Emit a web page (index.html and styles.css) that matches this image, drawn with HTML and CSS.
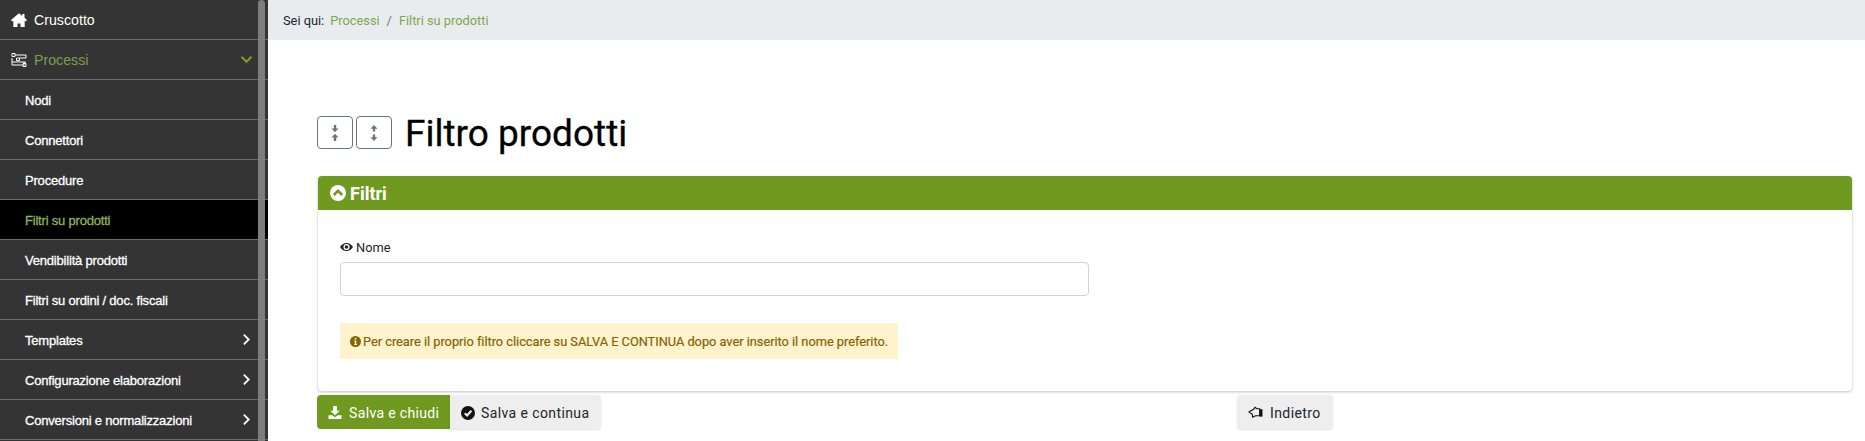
FILE: index.html
```html
<!DOCTYPE html>
<html lang="it">
<head>
<meta charset="utf-8">
<title>Filtro prodotti</title>
<link rel="stylesheet" href="styles.css">
</head>
<body>
<div class="layout">
  <aside class="sidebar">
    <nav class="menu">
      <a class="item top"><svg class="ico-home" viewBox="0 0 16 14"><path fill="#fff" d="M8 .2 0 7l1.200 1.400L2.300 7.500V14h4.200v-3.600h3V14h4.200V7.500l1.100.9L16 7l-2.500-2.200V1h-2.300v1.900L8 .2z"/></svg><span>Cruscotto</span></a>
      <a class="item top active-parent"><svg class="ico-proc" viewBox="0 0 16 14" fill="none" stroke="#fff" stroke-width="1"><path d="M4 2h11v3H6M1 .5h3v3H1zM1 5v4h14M5.500 5v2.500h3V5M13 9v3.500M4 12h8M12 10.500h3v3h-3zM1 9v3h3"/></svg><span>Processi</span><svg class="chev" viewBox="0 0 14 10"><path fill="none" stroke="#7c9f24" stroke-width="2.400" d="M1.500 2 7 7.500 12.500 2"/></svg></a>
      <a class="item sub">Nodi</a>
      <a class="item sub">Connettori</a>
      <a class="item sub">Procedure</a>
      <a class="item sub current">Filtri su prodotti</a>
      <a class="item sub">Vendibilità prodotti</a>
      <a class="item sub">Filtri su ordini / doc. fiscali</a>
      <a class="item sub">Templates<svg class="chev-r" viewBox="0 0 10 14"><path fill="none" stroke="#fff" stroke-width="2" d="M2 1.500 7.500 7 2 12.500"/></svg></a>
      <a class="item sub">Configurazione elaborazioni<svg class="chev-r" viewBox="0 0 10 14"><path fill="none" stroke="#fff" stroke-width="2" d="M2 1.500 7.500 7 2 12.500"/></svg></a>
      <a class="item sub">Conversioni e normalizzazioni<svg class="chev-r" viewBox="0 0 10 14"><path fill="none" stroke="#fff" stroke-width="2" d="M2 1.500 7.500 7 2 12.500"/></svg></a>
    </nav>
    <div class="scrollbar"></div>
  </aside>
  <main class="main">
    <div class="breadcrumb"><span class="here">Sei qui:</span><a>Processi</a><span class="sep">/</span><a>Filtri su prodotti</a></div>
    <div class="content">
      <div class="title-row">
        <button class="tool"><svg viewBox="0 0 10 18" width="10" height="18"><path fill="#6c757d" d="M3.800 1h2.400v3.500H8.500L5 8.300 1.500 4.500h2.300zM5 9.700l3.500 3.800H6.200V17H3.800v-3.500H1.500z"/></svg></button>
        <button class="tool"><svg viewBox="0 0 10 18" width="10" height="18"><path fill="#6c757d" d="M5 1l3.500 3.800H6.200v2.700H3.800V4.800H1.500zM3.800 10.500h2.400v2.700h2.300L5 17l-3.500-3.800h2.300z"/></svg></button>
        <h1>Filtro prodotti</h1>
      </div>
      <section class="card">
        <header class="card-head"><svg class="ico-up" viewBox="0 0 16 16"><circle cx="8" cy="8" r="8" fill="#fff"/><path fill="none" stroke="#6f9a1f" stroke-width="2.600" d="M3.800 10 8 5.800 12.200 10"/></svg><span>Filtri</span></header>
        <div class="card-body">
          <label class="label"><svg class="ico-eye" viewBox="0 0 16 12"><path fill="#212529" fill-rule="evenodd" d="M8 1C4.500 1 1.500 3.200 0 6c1.500 2.800 4.500 5 8 5s6.500-2.200 8-5c-1.500-2.800-4.500-5-8-5zM8 2.200a3.800 3.800 0 1 1 0 7.600 3.800 3.800 0 0 1 0-7.600zM8 3.800a2.200 2.200 0 1 0 0 4.400 2.200 2.200 0 0 0 0-4.400z"/></svg>Nome</label>
          <input class="input" type="text">
          <div class="alert"><svg class="ico-info" viewBox="0 0 16 16"><circle cx="8" cy="8" r="8" fill="#856404"/><path fill="#fff3cd" d="M6.800 2.800h2.400v2.400H6.800zM6 6.500h3.200v5h1V13H6v-1.500h1V8H6z"/></svg><span>Per creare il proprio filtro cliccare su SALVA E CONTINUA dopo aver inserito il nome preferito.</span></div>
        </div>
      </section>
      <div class="actions">
        <div class="group">
          <button class="btn primary"><svg class="ico-dl" viewBox="0 0 14 14"><path fill="#fff" d="M5 0h4v5h3L7 10 2 5h3zM0 10h4l3 2 3-2h4v4H0z"/></svg>Salva e chiudi</button>
          <button class="btn light"><svg class="ico-check" viewBox="0 0 16 16"><circle cx="8" cy="8" r="8" fill="#111"/><path fill="none" stroke="#eee" stroke-width="2.400" d="M4.300 8.200 7 10.900l4.800-5.400"/></svg>Salva e continua</button>
        </div>
        <button class="btn light back"><svg class="ico-hand" viewBox="0 0 16 14" fill="none" stroke="#111" stroke-width="1.200"><path d="M1 6.500l5-3 1.500-2L9.500 3h3v7.500H8L5 12 4.500 9 1 6.500z"/><path fill="#111" stroke="none" d="M12.500 3.500H15.500V11.500H12.500z"/></svg>Indietro</button>
      </div>
    </div>
  </main>
</div>
</body>
</html>
```
FILE: styles.css
```css
* { box-sizing: border-box; }
html, body { margin: 0; height: 441px; overflow: hidden; background: #fff; }
body { font-family: Roboto, "Liberation Sans", sans-serif; color: #212529; }
.layout { display: flex; height: 441px; }
.sidebar { width: 268px; flex: none; background: #343434; position: relative; overflow: hidden; }
.scrollbar { position: absolute; top: 0; bottom: 0; left: 258px; width: 7px; background: #7d7d7d; border-radius: 4px 4px 0 0; }
.menu { display: flex; flex-direction: column; }
.item { display: flex; align-items: center; height: 40px; border-bottom: 1px solid #6b6b6b; flex: none; position: relative; font-family: "Liberation Sans", Arial, sans-serif; color: #fff; white-space: nowrap; }
.top { font-size: 14.2px; padding-left: 11px; }
.ico-home { width: 16px; height: 14px; margin-right: 7px; }
.ico-proc { width: 16px; height: 14px; margin-right: 7px; }
.active-parent { color: #7c9f4a; }
.chev { position: absolute; left: 240px; top: 15px; width: 13px; height: 9px; }
.sub { font-size: 13px; padding-left: 25px; letter-spacing: -0.2px; -webkit-text-stroke: 0.3px #fff; padding-top: 1px; }
.current { background: #000; color: #8fb35a; -webkit-text-stroke: 0.3px #8fb35a; }
.chev-r { position: absolute; left: 242px; top: 13px; width: 9px; height: 13px; }
.main { flex: 1; min-width: 0; display: flex; flex-direction: column; }
.breadcrumb { height: 40px; background: #e9ecef; display: flex; align-items: center; padding-left: 15px; font-size: 12.8px; flex: none; }
.breadcrumb a { color: #7fa650; }
.here { margin-right: 6px; }
.sep { margin: 0 7px; color: #6c757d; }
.content { padding: 76px 13px 0 50px; display: flex; flex-direction: column; }
.title-row { display: flex; align-items: center; height: 33px; gap: 3px; margin-left: -1px; }
.tool { width: 36px; height: 33px; padding: 0; background: #fff; border: 1px solid #6c757d; border-radius: 4px; display: flex; align-items: center; justify-content: center; }
h1 { margin: 2px 0 0 10px; font-size: 37px; font-weight: 400; -webkit-text-stroke: 0.3px #000; color: #000; line-height: 40px; white-space: nowrap; }
.card { margin-top: 27px; height: 215px; border-radius: 4px; background: #fff; box-shadow: 0 1px 3px rgba(0,0,0,.25); }
.card-head { height: 34px; background: #6f9a1f; border-radius: 4px 4px 0 0; color: #fff; display: flex; align-items: center; padding-left: 12px; font-size: 18px; font-weight: 700; }
.ico-up { width: 16px; height: 16px; margin-right: 4px; }
.card-body { padding: 29px 22px 0; }
.label { display: flex; align-items: center; font-size: 12.8px; height: 16px; }
.ico-eye { width: 13px; height: 10px; margin-right: 3px; }
.input { display: block; width: 749px; height: 34px; margin-top: 7px; border: 1px solid #ced4da; border-radius: 4px; background: #fff; }
.alert { margin-top: 27px; width: 558px; height: 36px; background: #fff3cd; color: #856404; font-size: 12.8px; font-weight: 400; -webkit-text-stroke: 0.2px #856404; display: flex; align-items: center; padding: 1px 0 0 10px; white-space: nowrap; letter-spacing: -0.02px; }
.ico-info { width: 11px; height: 11px; margin-right: 2px; flex: none; }
.actions { margin-top: 4px; display: flex; position: relative; margin-left: -1px; }
.group { display: flex; }
.btn { height: 34px; border: 0; font-family: Roboto, sans-serif; font-size: 14px; letter-spacing: .4px; display: flex; align-items: center; padding: 1px 0 0 11px; white-space: nowrap; }
.primary { background: #6f9a1f; color: #fff; border-radius: 4px 0 0 4px; width: 133px; font-weight: 400; letter-spacing: .35px; }
.ico-dl { width: 14px; height: 13px; margin-right: 7px; flex: none; }
.light { background: #eee; color: #212529; border-radius: 0 4px 4px 0; box-shadow: 0 1px 2px rgba(0,0,0,.12); }
.group .light { width: 151px; }
.ico-check { width: 14px; height: 14px; margin-right: 6px; flex: none; }
.back { margin-left: 636px; border-radius: 4px; width: 96px; }
.ico-hand { width: 15px; height: 13px; margin-right: 7px; flex: none; }
```
